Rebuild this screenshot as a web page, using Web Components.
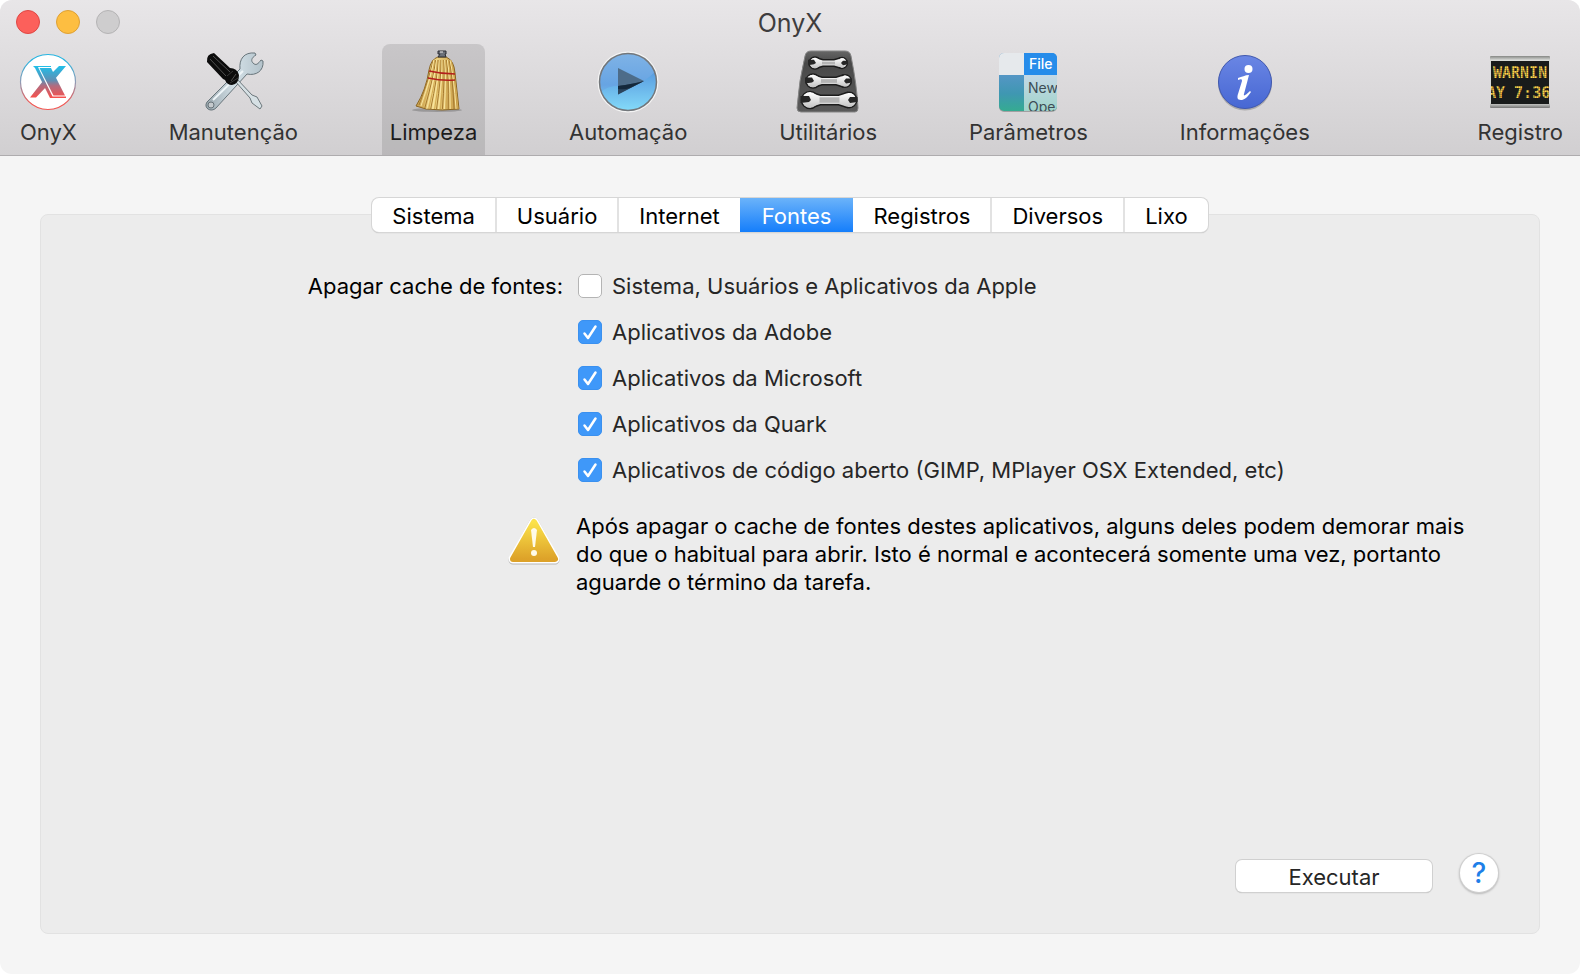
<!DOCTYPE html>
<html lang="pt-BR">
<head>
    <meta charset="UTF-8"/>
    <meta name="viewport" content="width=device-width, initial-scale=1">
    <title>OnyX</title>
    <style>
        body {
            margin: 0;
            background: #fff;
            color: #000;
            font: 22px/28px Inter, "Liberation Sans", sans-serif;
        }
    </style>
</head>
<body>

<onyx-window heading="OnyX">
    <onyx-toolbar slot="toolbar">
        <onyx-tool icon="onyx">OnyX</onyx-tool>
        <onyx-tool icon="tools">Manutenção</onyx-tool>
        <onyx-tool icon="broom" selected>Limpeza</onyx-tool>
        <onyx-tool icon="play">Automação</onyx-tool>
        <onyx-tool icon="rack">Utilitários</onyx-tool>
        <onyx-tool icon="menu">Parâmetros</onyx-tool>
        <onyx-tool icon="info">Informações</onyx-tool>
        <onyx-tool icon="log" class="last">Registro</onyx-tool>
    </onyx-toolbar>

    <onyx-panel>
        <onyx-tabs slot="tabs">
            <onyx-tab>Sistema</onyx-tab>
            <onyx-tab>Usuário</onyx-tab>
            <onyx-tab>Internet</onyx-tab>
            <onyx-tab selected>Fontes</onyx-tab>
            <onyx-tab>Registros</onyx-tab>
            <onyx-tab>Diversos</onyx-tab>
            <onyx-tab>Lixo</onyx-tab>
        </onyx-tabs>

        <onyx-field caption="Apagar cache de fontes:">
            <onyx-check>Sistema, Usuários e Aplicativos da Apple</onyx-check>
            <onyx-check checked>Aplicativos da Adobe</onyx-check>
            <onyx-check checked>Aplicativos da Microsoft</onyx-check>
            <onyx-check checked>Aplicativos da Quark</onyx-check>
            <onyx-check checked>Aplicativos de código aberto (GIMP, MPlayer OSX Extended, etc)</onyx-check>
        </onyx-field>

        <onyx-notice>Após apagar o cache de fontes destes aplicativos, alguns deles podem demorar mais do que o habitual para abrir. Isto é normal e acontecerá somente uma vez, portanto aguarde o término da tarefa.</onyx-notice>

        <onyx-button slot="actions">Executar</onyx-button>
        <onyx-help slot="actions"></onyx-help>
    </onyx-panel>
</onyx-window>

<script>
    // Double-ended wrench, lying flat between two heads
    function rackWrench(x1, x2, y, r) {
        const n = r * 0.36;
        const t = r * 0.55;
        return `
            <g stroke="#1c1c1c" stroke-width="1.5" fill="url(#steel)">
                <circle cx="${x1}" cy="${y}" r="${r}"/>
                <circle cx="${x2}" cy="${y}" r="${r * 0.9}"/>
                <path d="M${x1 + 2} ${y - r + 1} L${x1 + r + 2} ${y - t} H${x2 - r - 2} L${x2 - 2} ${y - r + 1} V${y + r - 1} L${x2 - r - 2} ${y + t} H${x1 + r + 2} L${x1 + 2} ${y + r - 1}Z"/>
            </g>
            <circle cx="${x1}" cy="${y}" r="${r - 0.7}" fill="url(#steel)"/>
            <circle cx="${x2}" cy="${y}" r="${r * 0.9 - 0.7}" fill="url(#steel)"/>
            <path d="M${x1 + r + 1} ${y - t + 2} H${x2 - r - 1} V${y + t - 2} H${x1 + r + 1}Z" fill="#b4b4b4"/>
            <path d="M${x1 - r - 1} ${y - n - 1} L${x1 - 1} ${y - n - 1} L${x1 + 1} ${y} L${x1 - 1} ${y + n - 1} L${x1 - r - 1} ${y + n}Z" fill="#262626"/>
            <path d="M${x2 + r} ${y - n} L${x2 + 1} ${y - n} L${x2 - 1} ${y} L${x2 + 1} ${y + n} L${x2 + r} ${y + n - 1}Z" fill="#262626"/>`;
    }

    // Bristles fan out from the neck of the broom
    function bristles() {
        let lines = '';
        for (let i = 0; i <= 20; i++) {
            const top = 31 + i * 0.9;
            const mid = 28 + i * 1.25;
            const end = 17 + i * 1.95;
            const color = ['#a67a30', '#f9e6a0', '#d3ab54'][i % 3];
            lines += `<path d="M${top} 10 Q${mid} 26 ${end} ${55 + Math.min(i, 4)}" stroke="${color}"/>`;
        }
        return lines;
    }

    const icons = {
        onyx: `
            <linearGradient id="ring" x2="0" y2="1"><stop offset="0.1" stop-color="#27b4e0"/><stop offset="0.5" stop-color="#8f9bb5"/><stop offset="0.9" stop-color="#f2544f"/></linearGradient>
            <linearGradient id="mark" gradientUnits="userSpaceOnUse" x1="0" y1="16" x2="0" y2="48"><stop offset="0" stop-color="#1fc0ea"/><stop offset="0.45" stop-color="#5f8fb4"/><stop offset="0.62" stop-color="#b16c80"/><stop offset="1" stop-color="#f9504b"/></linearGradient>
            <circle cx="32" cy="32" r="27.5" fill="#fff" stroke="url(#ring)" stroke-width="1.2"/>
            <path d="M43 16H50L39 29L35 24ZM27 31L30 37L20 47.500H14Z" fill="url(#mark)"/>
            <path d="M23.500 18H35L49 45.500H37.500Z" fill="url(#mark)"/>
            <path d="M17 16H35V17H22L36.500 46.500H50V48H34L19 18Z" fill="url(#mark)"/>`,
        tools: `
            <linearGradient id="metal"><stop offset="0" stop-color="#98a5ac"/><stop offset="0.5" stop-color="#d3e0e7"/><stop offset="1" stop-color="#b3c2ca"/></linearGradient>
            <path d="M6 52L39 19C38 9 43 2 54 3L55 5C50 8 50 11 52 13C55 16 57 14 60 10L62 11C63 21 55 26 46 24L15 58C10 63 2 58 6 52Z" fill="url(#metal)" stroke="#67747a"/>
            <path d="M12 50L42 21" stroke="#eef5f8" stroke-width="2"/>
            <circle cx="10" cy="55" r="3" fill="#c5cacd" stroke="#687379"/>
            <path d="M34 31L36 29L51 45L56 47L61 56L59 59L51 53L49 48Z" fill="#d6e0e4" stroke="#6c777c"/>
            <path d="M6 12Q5 4 13 3L29 18Q36 18 38 25Q38 34 31 35Q26 35 24 30L22 29Z" fill="#0c0c0c"/>
            <path d="M9 9L25 26M12 6L29 22M30 31L35 24" stroke="#505050" stroke-width="1"/>
            <path d="M26 26L32 21M29 33L37 28" stroke="#383838" stroke-width="1"/>`,
        broom: `
            <linearGradient id="straw"><stop offset="0" stop-color="#c59b48"/><stop offset="0.4" stop-color="#f3da8b"/><stop offset="1" stop-color="#c29540"/></linearGradient>
            <ellipse cx="35" cy="60" rx="25" ry="2" fill="#000" opacity="0.2"/>
            <path d="M36 7H44Q52 10 53 23L57 59Q40 61 24 59L14 56Q24 40 27 20Q29 9 36 7Z" fill="url(#straw)" stroke="#8a6522"/>
            <g fill="none" stroke-width="1">${bristles()}</g>
            <path d="M27 21Q40 24 53 24M26 28Q40 31 53 30" stroke="#b21f1c" stroke-width="1.500" fill="none"/>
            <path d="M36 1H44V4H43L44 7H36L38 4H36Z" fill="#6c717a" stroke="#2c2f35"/>
            <path d="M38 2H41" stroke="#eee"/>`,
        play: `
            <linearGradient id="sky" x2="0" y2="1"><stop offset="0" stop-color="#7fb3e6"/><stop offset="0.55" stop-color="#67a4e3"/><stop offset="1" stop-color="#7cd4f8"/></linearGradient>
            <linearGradient id="sea" x2="0" y2="1"><stop offset="0" stop-color="#5596dd"/><stop offset="1" stop-color="#85dcfa"/></linearGradient>
            <clipPath id="disc"><circle cx="32" cy="32" r="28.500"/></clipPath>
            <circle cx="32" cy="32" r="30.500" fill="#f4f4f4"/>
            <circle cx="32" cy="32" r="28.500" fill="url(#sky)"/>
            <path d="M2 44Q13 34 28 36Q49 35 62 18V62H2Z" fill="url(#sea)" clip-path="url(#disc)"/>
            <circle cx="32" cy="32" r="28.500" fill="none" stroke="#73777b" stroke-width="1.500"/>
            <path d="M22 18L48 31L22 44.500Z" fill="#4d6c89"/>
            <path d="M22 36Q37 34 48 31L22 44.500Z" fill="#2b445c"/>
            <path d="M22 36Q37 34 48 31L34 38Q28 40 22 39Z" fill="#14283b"/>`,
        rack: `
            <linearGradient id="steel" x2="0" y2="1"><stop offset="0" stop-color="#fff"/><stop offset="1" stop-color="#c4c4c4"/></linearGradient>
            <linearGradient id="plate" x2="0" y2="1"><stop offset="0" stop-color="#666"/><stop offset="0.2" stop-color="#484848"/><stop offset="1" stop-color="#5a5a5a"/></linearGradient>
            <path d="M15 1H49Q54 1 55 6Q61 36 62 58Q62 62 59 62H5Q1 62 1 58Q3 30 9 6Q10 1 15 1Z" fill="url(#plate)" stroke="#858585"/>
            ${rackWrench(19, 46, 13, 6)}
            ${rackWrench(17, 49, 31, 7)}
            ${rackWrench(14, 53, 50, 8.5)}`,
        menu: `
            <linearGradient id="desk" x2="0" y2="1"><stop offset="0" stop-color="#5c9ac8"/><stop offset="0.4" stop-color="#5396c4"/><stop offset="0.7" stop-color="#3f97b2"/><stop offset="1" stop-color="#35ab91"/></linearGradient>
            <linearGradient id="list" x2="0" y2="1"><stop offset="0" stop-color="#c4d8e6"/><stop offset="1" stop-color="#a0d4cb"/></linearGradient>
            <clipPath id="tile"><rect x="3" y="3" width="58" height="58" rx="5"/></clipPath>
            <rect x="3" y="4" width="58" height="58" rx="5" fill="#000" opacity="0.25"/>
            <g clip-path="url(#tile)" font-family="Inter, sans-serif" font-size="14">
                <rect x="3" y="3" width="58" height="58" fill="url(#desk)"/>
                <rect x="3" y="3" width="25" height="22" fill="#e6e9ec"/>
                <rect x="28" y="25" width="33" height="36" fill="url(#list)"/>
                <rect x="28" y="3" width="33" height="22" fill="#268cea"/>
                <text x="33" y="19" fill="#fff" font-weight="500">File</text>
                <text x="32" y="43" fill="#3d4c55">New</text>
                <text x="32" y="62" fill="#3d4c55">Ope</text>
            </g>`,
        info: `
            <linearGradient id="blue" x2="0" y2="1"><stop offset="0" stop-color="#6a86e4"/><stop offset="1" stop-color="#4767d3"/></linearGradient>
            <circle cx="32" cy="33.500" r="27" fill="#000" opacity="0.2"/>
            <circle cx="32" cy="32" r="26.500" fill="url(#blue)" stroke="#4058ae"/>
            <circle cx="35.500" cy="19" r="4" fill="#fff"/>
            <path d="M25 28C29 27 32 25 36 25L31 44C30 47 33 45 37 41L38 42C34 48 31 50 28 50C24 50 24 47 25 44L29 31C29 29 28 29 25 30Z" fill="#fff"/>`,
        log: `
            <linearGradient id="frame" x2="0" y2="1"><stop offset="0" stop-color="#858784"/><stop offset="0.08" stop-color="#d8dad7"/><stop offset="0.9" stop-color="#d8dad7"/><stop offset="1" stop-color="#777"/></linearGradient>
            <clipPath id="screen"><rect x="3" y="11" width="58" height="43"/></clipPath>
            <pattern id="dots" width="2" height="2" patternUnits="userSpaceOnUse"><path d="M0 0H2M0 0V2" stroke="#191b1b" stroke-width="0.500"/></pattern>
            <rect x="2" y="6" width="60" height="52" rx="1" fill="url(#frame)"/>
            <rect x="3" y="11" width="58" height="43" fill="#191b1b"/>
            <g clip-path="url(#screen)" fill="#ffd24a" font-family="DejaVu Sans Mono, monospace" font-weight="bold" font-size="15">
                <text x="5" y="28">WARNIN</text>
                <text x="-1" y="48">AY 7:36</text>
            </g>
            <rect x="3" y="11" width="58" height="43" fill="url(#dots)"/>`
    };

    function element(tagName, html, setup) {
        window.customElements.define(tagName, class extends HTMLElement {
            constructor() {
                super();
                const template = document.createElement('template');
                template.innerHTML = html;
                this.attachShadow({ mode: 'open' }).appendChild(template.content.cloneNode(true));
            }

            connectedCallback() {
                if (setup) {
                    setup(this, this.shadowRoot);
                }
            }
        });
    }

    element('onyx-window', `
        <style>
            :host {
                display: flex; flex-direction: column; min-height: 100vh;
                background: #f5f5f5; border-radius: 12px; overflow: hidden;
            }
            header { background: linear-gradient(#e8e6e8, #d1cfd1); border-bottom: 1px solid #aeacae; }
            .title { display: grid; grid-template-columns: 1fr auto 1fr; align-items: center; height: 44px; padding: 0 16px; }
            .lights { display: flex; gap: 16px; }
            .lights button { width: 24px; height: 24px; padding: 0; border-width: 1px; border-style: solid; border-radius: 50%; }
            .close { background: #fc605b; border-color: #df4744; }
            .min { background: #fdbe41; border-color: #dea034; }
            .zoom { background: #cecdce; border-color: #b4b3b4; }
            h1 { margin: 0; padding-top: 2px; font-size: 25px; font-weight: 400; color: #3e3d3e; }
            main { flex: 1; display: flex; padding: 42px 40px 40px; }
        </style>
        <header>
            <div class="title">
                <div class="lights">
                    <button class="close" aria-label="Fechar"></button>
                    <button class="min" aria-label="Minimizar"></button>
                    <button class="zoom" aria-label="Zoom" disabled></button>
                </div>
                <h1></h1>
            </div>
            <slot name="toolbar"></slot>
        </header>
        <main><slot></slot></main>
    `, (host, root) => {
        root.querySelector('h1').textContent = host.getAttribute('heading');
    });

    element('onyx-toolbar', `
        <style>
            :host { display: block; }
            nav { display: flex; justify-content: space-between; padding: 0 9px 0 12px; }
            ::slotted(.last) { margin-left: 76px; }
        </style>
        <nav><slot></slot></nav>
    `);

    element('onyx-tool', `
        <style>
            :host { display: block; }
            button {
                display: flex; flex-direction: column; align-items: center; gap: 4px;
                padding: 6px 8px 9px; border: 0; border-radius: 8px 8px 0 0;
                background: none; font: inherit; color: #333;
            }
            svg { width: 64px; height: 64px; margin: 0 -8px; }
            :host([selected]) button { background: rgba(0, 0, 0, 0.11); color: #1c1c1c; }
        </style>
        <button><svg viewBox="0 0 64 64" fill="none" aria-hidden="true"></svg><span><slot></slot></span></button>
    `, (host, root) => {
        root.querySelector('svg').innerHTML = icons[host.getAttribute('icon')];
    });

    element('onyx-panel', `
        <style>
            :host { display: flex; flex-direction: column; flex: 1; }
            .tabs { display: flex; justify-content: center; position: relative; z-index: 1; }
            .box {
                flex: 1; display: flex; flex-direction: column; margin-top: -18px; padding-top: 57px;
                background: #ececec; border: 1px solid #e2e2e2; border-radius: 8px;
            }
            .actions { display: flex; justify-content: flex-end; align-items: flex-end; gap: 28px; margin-top: auto; padding: 0 41px 41px; }
        </style>
        <div class="tabs"><slot name="tabs"></slot></div>
        <div class="box">
            <slot></slot>
            <div class="actions"><slot name="actions"></slot></div>
        </div>
    `);

    element('onyx-tabs', `
        <style>
            :host { display: block; }
            div {
                display: flex; background: #fff; border-radius: 7px;
                box-shadow: 0 0 0 1px #d6d6d6, 0 1px 1px #a8a8a8;
            }
        </style>
        <div role="tablist"><slot></slot></div>
    `);

    element('onyx-tab', `
        <style>
            :host { display: block; }
            :host(:not(:first-child)) { border-left: 2px solid #e2e2e2; }
            button { display: block; padding: 2px 20px 0; border: 0; background: none; font: inherit; line-height: 32px; color: #000; }
            :host([selected]) { border: 0; }
            :host([selected]) button { padding: 2px 22px 0; background: linear-gradient(#6bb3fa, #157efb); color: #fff; }
        </style>
        <button role="tab"><slot></slot></button>
    `, (host, root) => {
        root.querySelector('button').setAttribute('aria-selected', host.hasAttribute('selected'));
        // The highlighted tab touches its neighbours without a divider
        if (host.hasAttribute('selected') || (host.previousElementSibling && host.previousElementSibling.hasAttribute('selected'))) {
            host.style.borderLeft = '0';
        }
    });

    element('onyx-field', `
        <style>
            :host { display: block; }
            .field { display: grid; grid-template-columns: 522px 1fr; gap: 15px; }
            .caption { text-align: right; }
            .options { display: flex; flex-direction: column; align-items: flex-start; gap: 18px; }
        </style>
        <div class="field" role="group" aria-labelledby="caption">
            <span class="caption" id="caption"></span>
            <div class="options"><slot></slot></div>
        </div>
    `, (host, root) => {
        root.querySelector('.caption').textContent = host.getAttribute('caption');
    });

    element('onyx-check', `
        <style>
            :host { display: block; color: #262626; }
            label { display: flex; align-items: center; gap: 10px; }
            .mark { display: grid; width: 24px; height: 24px; }
            .mark > * { grid-area: 1 / 1; }
            input {
                appearance: none; width: 24px; height: 24px; margin: 0;
                background: #fff; border: 1px solid #b4b4b4; border-radius: 5px;
            }
            input:checked { background: #3f98f9; border-color: #3a90ef; }
            svg { display: none; width: 24px; height: 24px; pointer-events: none; }
            input:checked + svg { display: block; }
        </style>
        <label>
            <span class="mark">
                <input type="checkbox">
                <svg viewBox="0 0 24 24" fill="none" stroke="#fff" stroke-width="2.500" stroke-linecap="round" stroke-linejoin="round"><path d="M6.500 13.500L10 18L17.500 6.500"/></svg>
            </span>
            <span><slot></slot></span>
        </label>
    `, (host, root) => {
        root.querySelector('input').checked = host.hasAttribute('checked');
    });

    element('onyx-notice', `
        <style>
            :host { display: grid; grid-template-columns: 520px 1fr; gap: 15px; margin-top: 28px; padding-right: 60px; }
            svg { justify-self: end; width: 54px; height: 54px; }
            p { margin: 0; }
        </style>
        <svg viewBox="0 0 54 54" aria-hidden="true">
            <linearGradient id="warn" x2="0" y2="1"><stop offset="0" stop-color="#fbe24a"/><stop offset="1" stop-color="#dda229"/></linearGradient>
            <path d="M27 10L48 48H6Z" fill="#aaa" stroke="#b4b4b4" stroke-width="9" stroke-linejoin="round"/>
            <path d="M27 10L48 47H6Z" fill="#fff" stroke="#fff" stroke-width="9" stroke-linejoin="round"/>
            <path d="M27 10L48 47H6Z" fill="url(#warn)" stroke="url(#warn)" stroke-width="6" stroke-linejoin="round"/>
            <path d="M24 18Q27 14 30 18L28 35H26Z" fill="#fffbe8"/>
            <circle cx="27" cy="41" r="3" fill="#fffbe8"/>
        </svg>
        <p><slot></slot></p>
    `);

    element('onyx-button', `
        <style>
            :host { display: block; }
            button {
                display: block; min-width: 196px; padding: 2px 0 0; border: 0; border-radius: 6px;
                background: #fff; box-shadow: 0 0 0 1px #d0d0d0, 0 1px 1px #a8a8a8;
                font: inherit; line-height: 30px; color: #262626;
            }
        </style>
        <button><slot></slot></button>
    `);

    element('onyx-help', `
        <style>
            :host { display: block; }
            button {
                display: block; width: 38px; height: 38px; padding: 0; border: 0; border-radius: 50%;
                background: #fff; box-shadow: 0 0 0 1px #d0d0d0, 0 1px 2px 1px #b8b8b8;
                font: inherit; font-size: 28px; font-weight: 500; line-height: 38px; color: #1e7fe8;
            }
        </style>
        <button>?</button>
    `);
</script>
</body>
</html>
